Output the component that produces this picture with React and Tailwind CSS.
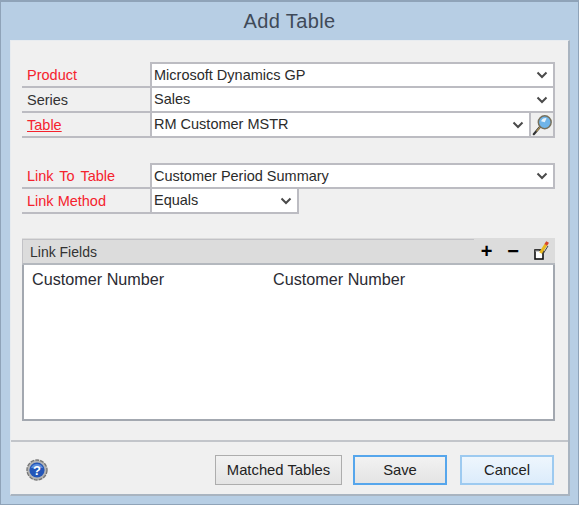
import React from 'react';

const Chevron = () => (
  <svg width="12" height="8" viewBox="0 0 12 8" className="shrink-0">
    <path d="M1.5 1.5 L6 6 L10.5 1.5" fill="none" stroke="#4a4a4a" strokeWidth="2" />
  </svg>
);

const Magnifier = () => (
  <svg width="24" height="24" viewBox="0 0 24 24">
    <path d="M3 22 L10 14" stroke="#333" strokeWidth="2.4" strokeLinecap="round" />
    <path d="M6 19 L10 14" stroke="#b59a5a" strokeWidth="1.2" />
    <circle cx="15" cy="9" r="7" fill="#6fb4e8" stroke="#77705c" strokeWidth="1.6" />
    <path d="M11 8 A5 5 0 0 1 17 4.5 L15 9 Z" fill="#e6f3fb" />
  </svg>
);

const Pencil = () => (
  <svg width="15" height="19" viewBox="0 0 15 19">
    <rect x="1" y="9" width="8" height="9" fill="#fff" stroke="#111" strokeWidth="1.6" />
    <path d="M1 10 L5 10" stroke="#999" strokeWidth="1" />
    <path d="M6.5 12 L12 3.5" stroke="#e8b81e" strokeWidth="3.2" />
    <path d="M11.8 3.8 L13.6 1" stroke="#d8452a" strokeWidth="3.2" />
    <path d="M9 13 L14 5" stroke="#444" strokeWidth="1" />
  </svg>
);

const Help = () => (
  <svg width="22" height="22" viewBox="0 0 22 22">
    <circle cx="11" cy="11" r="10" fill="#b4b4b4" stroke="#777" strokeWidth="1.4" strokeDasharray="4 1" />
    <circle cx="11" cy="11" r="7.6" fill="#2456b8" />
    <path d="M5 9 A6.5 6.5 0 0 1 17 9 Z" fill="#5f8fdc" />
    <text x="11" y="15.5" textAnchor="middle" fontSize="13" fontWeight="700" fill="#fff" fontFamily="Liberation Sans, sans-serif">?</text>
  </svg>
);

const Row = ({ label, value, red, first }) => (
  <div className={`flex ${first ? 'h-[26px]' : 'h-[25px]'}`}>
    <div className={`w-[128px] shrink-0 pl-[5px] flex items-end pb-[1px] text-[14.5px] leading-[20px] [word-spacing:2px] border-b-[2px] border-[#bcbcc2] ${red ? 'text-[#f5222d]' : 'text-[#333]'}`}>
      {label}
    </div>
    <div className={`flex-1 flex items-center bg-white border-b-[2px] border-x-[2px] border-[#bcbcc2] pl-[2px] pr-[3px] text-[14.5px] text-[#2b2b2b] ${first ? 'border-t-[2px]' : ''}`}>
      <span className="flex-1 pt-[1px]">{value}</span>
      <span className="pr-[2px]"><Chevron /></span>
    </div>
  </div>
);

const Btn = ({ label, cls }) => (
  <button className={`h-[30px] text-[14.8px] text-[#222] ${cls}`}>{label}</button>
);

export default function App() {
  return (
    <div className="w-[579px] h-[505px] overflow-hidden bg-[#b7cee4] border-t-[2px] border-x border-b border-[#8fa3b8] font-['Liberation_Sans',sans-serif]">
      <div className="h-[38px] flex items-center justify-center text-[20px] tracking-[0.4px] text-[#3f4a58]">Add Table</div>
      <div className="ml-[9px] w-[560px] h-[456px] bg-[#f0f0f0] border-t border-l border-[#e8ecf0] border-b-[2px] border-b-[#a9b4c0] border-r-[2px] border-r-[#a9b4c0]">
        <div className="pl-[11px] pr-[13px] pt-[21px]">
          <Row label="Product" value="Microsoft Dynamics GP" red first />
          <Row label="Series" value="Sales" />
          <div className="flex h-[25px]">
            <div className="w-[128px] shrink-0 pl-[5px] flex items-end pb-[1px] text-[14.5px] leading-[20px] border-b-[2px] border-[#bcbcc2] text-[#f5222d]">
              <span className="underline">Table</span>
            </div>
            <div className="flex-1 flex items-center bg-white border-b-[2px] border-l-[2px] border-[#bcbcc2] pl-[2px] pr-[3px] text-[14.5px] text-[#2b2b2b]">
              <span className="flex-1 pt-[1px]">RM Customer MSTR</span>
              <span className="pr-[2px]"><Chevron /></span>
            </div>
            <div className="w-[26px] flex items-center justify-center bg-[#efefef] border-b-[2px] border-x-[2px] border-[#bcbcc2]"><Magnifier /></div>
          </div>

          <div className="h-[25px]" />
          <Row label="Link To Table" value="Customer Period Summary" red first />
          <div className="flex h-[25px]">
            <div className="w-[128px] shrink-0 pl-[5px] flex items-end pb-[1px] text-[14.5px] leading-[20px] border-b-[2px] border-[#bcbcc2] text-[#f5222d]">Link Method</div>
            <div className="w-[149px] flex items-center bg-white border-b-[2px] border-x-[2px] border-[#bcbcc2] pl-[2px] pr-[3px] text-[14.5px] text-[#2b2b2b]">
              <span className="flex-1 pt-[1px]">Equals</span>
              <span className="pr-[2px]"><Chevron /></span>
            </div>
          </div>

          <div className="mt-[24px] h-[183px] flex flex-col">
            <div className="h-[27px] flex bg-[#dcdcdc] text-[14px] text-[#333]">
              <div className="flex-1 flex items-center pl-[7px] pt-[2px] mt-[1px] border-t border-l border-[#c2c2c6] border-b-[2px] border-b-[#b4b8be]">Link Fields</div>
              <div className="w-[81px] flex items-center justify-end gap-[15px] pr-[6px] border-b-[2px] border-[#b4b8be]">
                <span className="text-[20px] leading-none font-bold text-black">+</span>
                <span className="text-[20px] leading-none font-bold text-black">−</span>
                <Pencil />
              </div>
            </div>
            <div className="flex-1 flex bg-white border-x-[2px] border-b-[2px] border-[#a3a8b0] pl-[8px] pt-[3px] text-[16.2px] leading-[22px] text-[#2b2b33]">
              <div className="w-[241px]">Customer Number</div>
              <div>Customer Number</div>
            </div>
          </div>
        </div>

        <div className="mt-[19px] border-t-[2px] border-[#c2c5ca] pt-[13px] pl-[15px] pr-[14px] flex items-center">
          <Help />
          <div className="flex-1" />
          <Btn label="Matched Tables" cls="w-[127px] mr-[11px] border border-[#adadad] bg-gradient-to-b from-[#f2f2f2] to-[#e4e4e4]" />
          <Btn label="Save" cls="w-[94px] mr-[13px] border-[2px] border-[#56a6ec] bg-gradient-to-b from-[#f2f2f2] to-[#e4e4e4]" />
          <Btn label="Cancel" cls="w-[94px] border-[2px] border-[#9dcaf0] bg-gradient-to-b from-[#eef6fd] to-[#dcecfb]" />
        </div>
      </div>
    </div>
  );
}
